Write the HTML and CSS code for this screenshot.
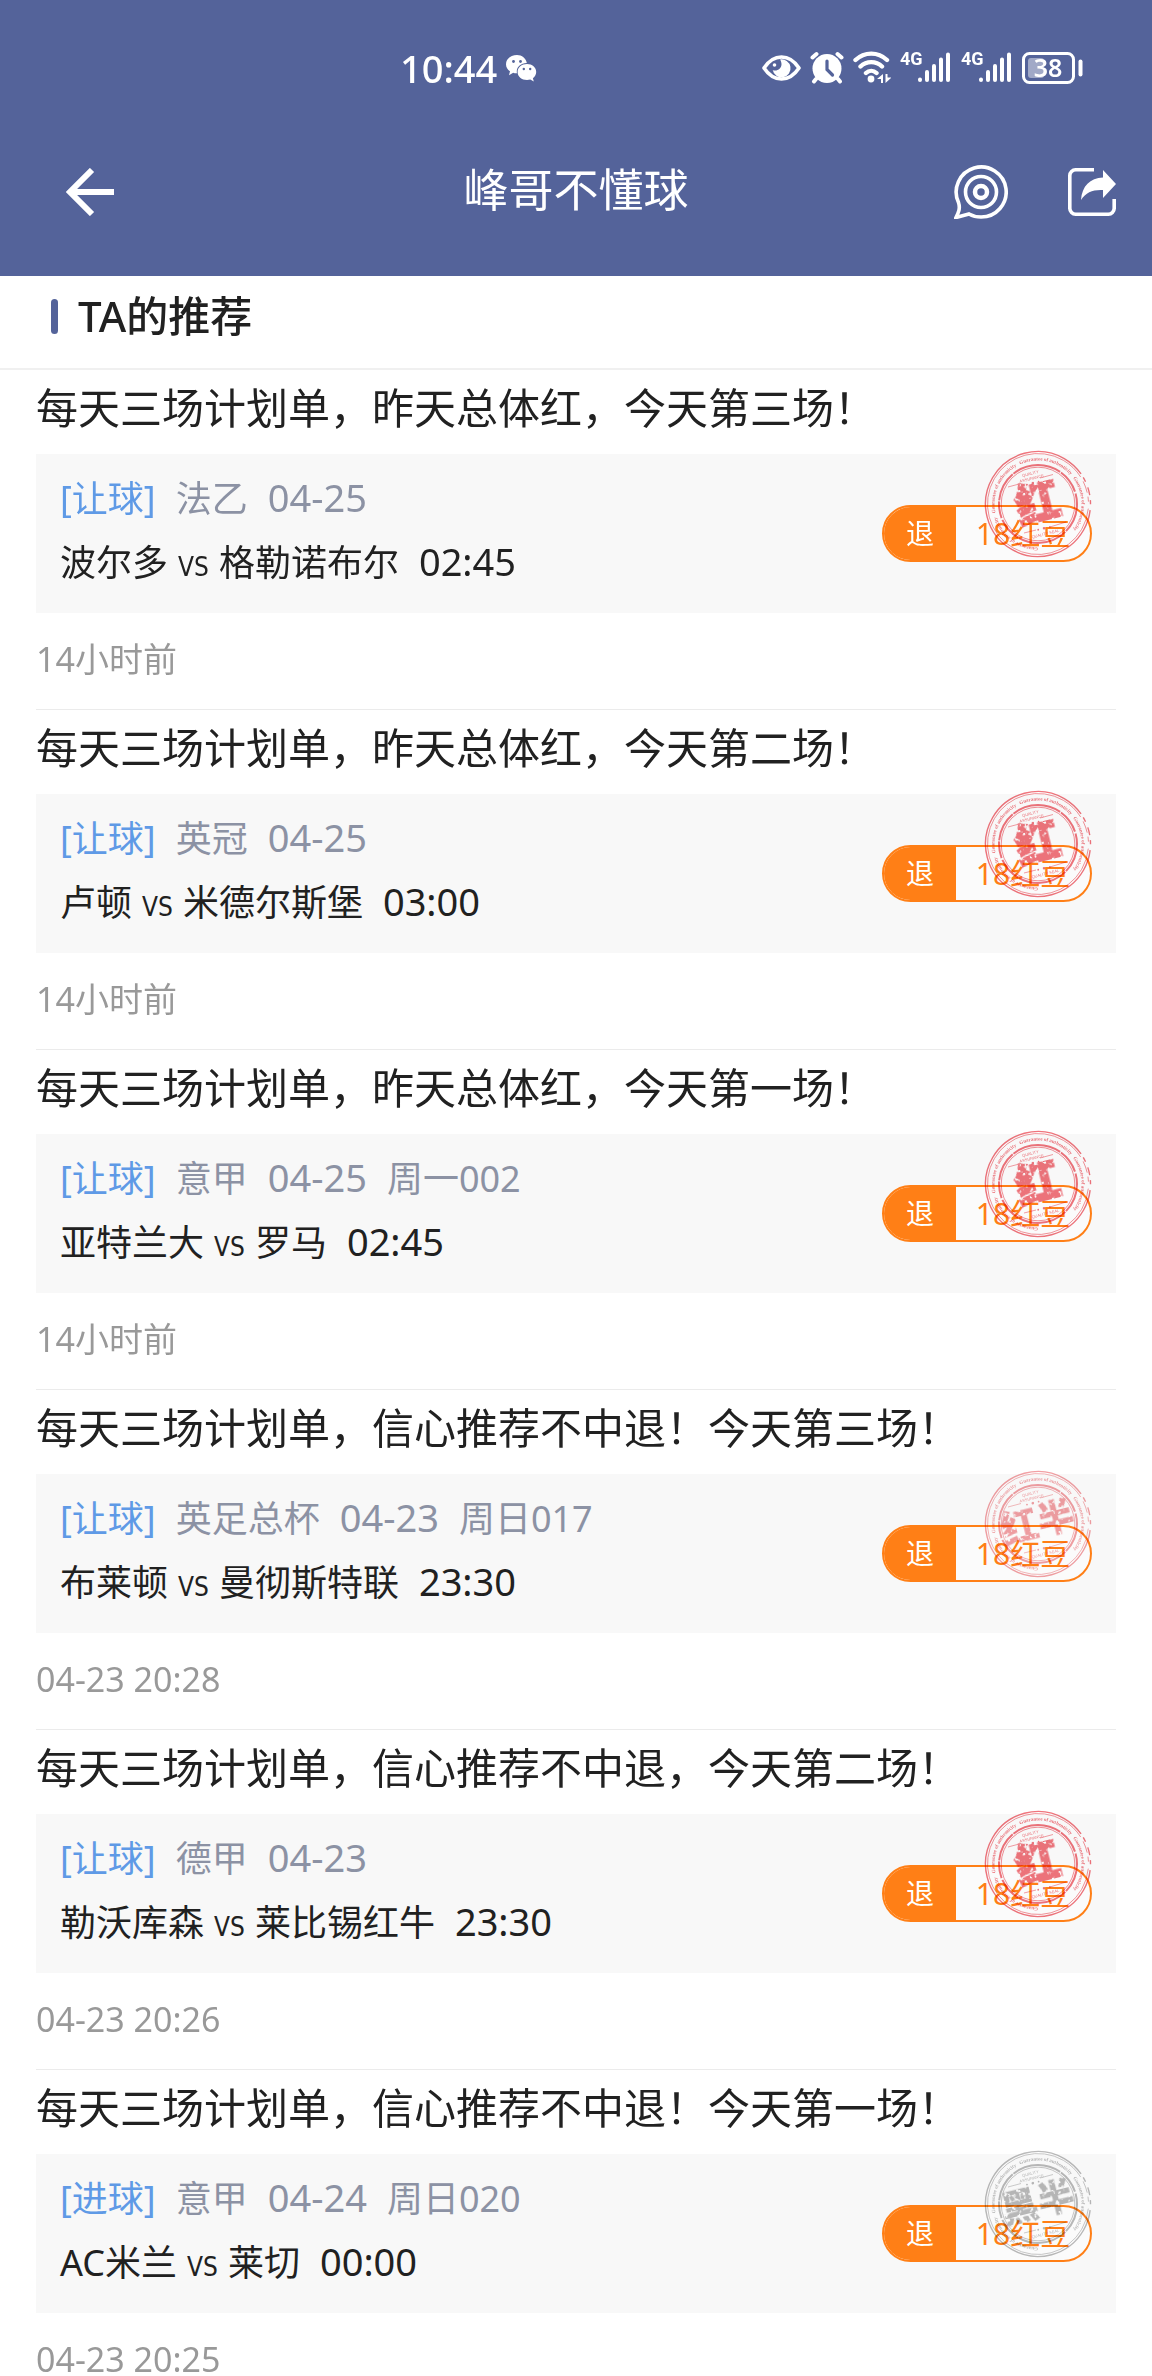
FILE: index.html
```html
<!DOCTYPE html>
<html lang="zh-CN">
<head>
    <meta charset="UTF-8">
    <meta name="viewport" content="width=device-width, initial-scale=1.0">
    <title>峰哥不懂球</title>
    <link rel="stylesheet" href="styles.css">
</head>
<body>

<!-- Shared shapes -->
<svg class="defs" aria-hidden="true">
    <defs>
        <filter id="grunge" x="-10%" y="-10%" width="120%" height="120%">
            <feTurbulence type="fractalNoise" baseFrequency="0.25" numOctaves="2" seed="7" result="noise"/>
            <feColorMatrix in="noise" type="matrix" values="0 0 0 0 0  0 0 0 0 0  0 0 0 0 0  0 0 0 -14 9.6" result="holes"/>
            <feComposite in="SourceGraphic" in2="holes" operator="in"/>
        </filter>
        <path id="ring-path" d="M54 97.5a43.5 43.5 0 1 1 .1 0"/>
    </defs>
    <symbol id="stamp-base" viewBox="0 0 108 108">
        <g fill="none" stroke="currentColor">
            <circle cx="54" cy="54" r="52.5" stroke-width="1.4" stroke-dasharray="270 4 5 6 8 5 4 6 22" transform="rotate(30 54 54)"/>
            <circle cx="54" cy="54" r="50.5" stroke-width=".7" stroke-dasharray="262 5 12 4 5 7 22" transform="rotate(30 54 54)"/>
            <circle cx="54" cy="54" r="39" stroke-width="2" stroke-dasharray="30 1 50 1 24 2 17 1"/>
            <circle cx="54" cy="54" r="36.8" stroke-width=".8"/>
            <path d="M24 37l13-3.500M56 28l13-3.500M40 83l12-3M66 77l16-5" stroke-width=".7"/>
        </g>
        <g fill="currentColor">
            <text class="stamp-ring"><textPath href="#ring-path">Guarantee of authenticity &#160; Guarantee of authenticity &#160; Guarantee of authenticity &#160; Guarantee of authenticity</textPath></text>
            <g transform="rotate(-14 54 54)">
                <text class="stamp-small" x="54" y="24">QUALITY</text>
                <text class="stamp-small" x="54" y="29">ASSURANCE</text>
                <text class="stamp-small" x="54" y="86">QUALITY SEAL</text>
                <circle cx="48" cy="32.500" r=".9"/><circle cx="54" cy="32.500" r="1.300"/><circle cx="60" cy="32.500" r=".9"/>
                <circle cx="48" cy="79" r=".9"/><circle cx="54" cy="79" r="1.300"/><circle cx="60" cy="79" r=".9"/>
            </g>
        </g>
    </symbol>
    <symbol id="signal" viewBox="0 0 52 34">
        <text class="signal-text" x="0" y="14">4G</text>
        <path d="M20 28.500v.5M27 21v8M34 15v14M41 8.500V29M48 3.500V29" stroke="#fff" stroke-width="4" stroke-linecap="round"/>
    </symbol>
</svg>

<div class="screen">
    <header class="header">
        <div class="status-bar">
            <div class="status-left">
                <span>10:44</span>
                <svg width="31" height="27" viewBox="0 0 31 27">
                    <path fill="#fff" d="M11 0C4.900 0 0 4 0 9.200c0 3 1.600 5.500 4 7.100L3 20.200l4.200-2.400c1.200.4 2.500.6 3.800.5-1.300-5.700 3.500-10.400 9.800-10.300C20 3.300 16 0 11 0z"/>
                    <path fill="#fff" d="M21 9c-5.400 0-9.400 3.500-9.400 8s4 8 9.400 8c1.200 0 2.300-.2 3.300-.5l3.500 2-.9-3.200c2-1.500 3.300-3.700 3.300-6.300 0-4.500-4-8-9.200-8z"/>
                    <g fill="#54639a"><circle cx="7.500" cy="6.500" r="1.400"/><circle cx="14.500" cy="6.500" r="1.400"/><circle cx="17.800" cy="14" r="1.200"/><circle cx="24.200" cy="14" r="1.200"/></g>
                </svg>
            </div>
            <div class="status-right">
                <svg width="39" height="34" viewBox="0 0 39 34">
                    <path d="M2 17C7 9.500 13 6 19.500 6S32 9.500 37 17c-5 7.500-11 11-17.500 11S7 24.500 2 17z" fill="none" stroke="#fff" stroke-width="3.600" stroke-linejoin="round"/>
                    <path d="M18 8.500a9 9 0 1 1-7.300 10.500 4 4 0 0 0 2.300.6c3.600 0 6.500-2.800 6.500-6.300 0-2-.6-3.500-1.500-4.800z" fill="#fff"/>
                    <circle cx="12.500" cy="14" r="1.800" fill="#fff"/>
                </svg>
                <svg width="34" height="34" viewBox="0 0 34 34">
                    <circle cx="17" cy="17.500" r="14.500" fill="#fff"/>
                    <path d="M17 10v8.500l5.500 5.500" fill="none" stroke="#54639a" stroke-width="3.200" stroke-linecap="round"/>
                    <path d="M2.500 6.500l4-3.500M31.500 6.500l-4-3.500M6 28l-2 2.500M28 28l2 2.500" stroke="#fff" stroke-width="4" stroke-linecap="round"/>
                </svg>
                <svg width="38" height="34" viewBox="0 0 38 34">
                    <g fill="none" stroke="#fff" stroke-width="4.400" stroke-linecap="round">
                        <path d="M2.500 9c9-8.500 22.500-8.500 31.500 0M7.500 15.500c6-5.800 15.500-5.800 21.500 0M13 22c3-2.800 7.500-2.800 10.500 0"/>
                    </g>
                    <circle cx="18" cy="28" r="3.400" fill="#fff"/>
                    <path d="M30 23v9h-2v-4h-4zM32.500 32V23h2v3.500h4z" fill="#fff"/>
                </svg>
                <svg width="52" height="34"><use href="#signal"/></svg>
                <svg width="52" height="34"><use href="#signal"/></svg>
                <svg width="62" height="34" viewBox="0 0 62 34">
                    <rect x="6" y="7" width="16" height="20" rx="3" fill="#fff" opacity=".45"/>
                    <rect x="1.500" y="2.500" width="50" height="29" rx="6" fill="none" stroke="#fff" stroke-width="3"/>
                    <path d="M58.500 10.500v13" stroke="#fff" stroke-width="4" stroke-linecap="round"/>
                    <text class="battery-text" x="26" y="26">38</text>
                </svg>
            </div>
        </div>
        <nav class="nav-bar">
            <button class="icon-button" aria-label="返回">
                <svg width="48" height="48" viewBox="0 0 48 48"><path d="M26 2L4 24l22 22M4 24h44" fill="none" stroke="#fff" stroke-width="6"/></svg>
            </button>
            <h1>峰哥不懂球</h1>
            <div class="nav-actions">
                <button class="icon-button" aria-label="消息">
                    <svg width="54" height="54" viewBox="0 0 54 54" fill="none" stroke="#fff" stroke-width="3.600">
                        <path d="M4.500 37.500A25 25 0 1 1 27 52c-4.500 0-8.500-1-12-3L2 52.500c2.500-5 4.500-9 2.500-15z"/>
                        <circle cx="27" cy="27" r="15.500"/>
                        <circle cx="27" cy="27" r="6" stroke-width="4.500"/>
                    </svg>
                </button>
                <button class="icon-button" aria-label="分享">
                    <svg width="48" height="48" viewBox="0 0 48 48">
                        <path d="M26 1.800H8A6 6 0 0 0 1.800 8v32A6 6 0 0 0 8 46.200h32a6 6 0 0 0 6.200-6.200V31" fill="none" stroke="#fff" stroke-width="3.600"/>
                        <path d="M13 32C14 18 22 10 35 9.500V2l13 14-13 14v-8c-10-.5-17 2-22 10z" fill="#fff"/>
                    </svg>
                </button>
            </div>
        </nav>
    </header>

    <h2 class="section-title">TA的推荐</h2>

    <main class="list">
        <article class="item">
            <h3>每天三场计划单，昨天总体红，今天第三场！</h3>
            <div class="card">
                <div class="match">
                    <p class="meta"><span class="type">[让球]</span><span>法乙</span><time>04-25</time></p>
                    <p class="teams">波尔多<span class="vs">VS</span>格勒诺布尔<time>02:45</time></p>
                </div>
                <button class="price"><span class="refund">退</span><span class="beans">18红豆</span></button>
                <svg class="stamp red" viewBox="0 0 108 108">
                    <use href="#stamp-base"/>
                    <text class="stamp-word large" x="54" y="69" transform="rotate(-14 54 54)">红</text>
                </svg>
            </div>
            <p class="posted">14小时前</p>
        </article>

        <article class="item">
            <h3>每天三场计划单，昨天总体红，今天第二场！</h3>
            <div class="card">
                <div class="match">
                    <p class="meta"><span class="type">[让球]</span><span>英冠</span><time>04-25</time></p>
                    <p class="teams">卢顿<span class="vs">VS</span>米德尔斯堡<time>03:00</time></p>
                </div>
                <button class="price"><span class="refund">退</span><span class="beans">18红豆</span></button>
                <svg class="stamp red" viewBox="0 0 108 108">
                    <use href="#stamp-base"/>
                    <text class="stamp-word large" x="54" y="69" transform="rotate(-14 54 54)">红</text>
                </svg>
            </div>
            <p class="posted">14小时前</p>
        </article>

        <article class="item">
            <h3>每天三场计划单，昨天总体红，今天第一场！</h3>
            <div class="card">
                <div class="match">
                    <p class="meta"><span class="type">[让球]</span><span>意甲</span><time>04-25</time><span>周一002</span></p>
                    <p class="teams">亚特兰大<span class="vs">VS</span>罗马<time>02:45</time></p>
                </div>
                <button class="price"><span class="refund">退</span><span class="beans">18红豆</span></button>
                <svg class="stamp red" viewBox="0 0 108 108">
                    <use href="#stamp-base"/>
                    <text class="stamp-word large" x="54" y="69" transform="rotate(-14 54 54)">红</text>
                </svg>
            </div>
            <p class="posted">14小时前</p>
        </article>

        <article class="item">
            <h3>每天三场计划单，信心推荐不中退！今天第三场！</h3>
            <div class="card">
                <div class="match">
                    <p class="meta"><span class="type">[让球]</span><span>英足总杯</span><time>04-23</time><span>周日017</span></p>
                    <p class="teams">布莱顿<span class="vs">VS</span>曼彻斯特联<time>23:30</time></p>
                </div>
                <button class="price"><span class="refund">退</span><span class="beans">18红豆</span></button>
                <svg class="stamp half-red" viewBox="0 0 108 108">
                    <use href="#stamp-base"/>
                    <text class="stamp-word" x="54" y="66" transform="rotate(-14 54 54)">红半</text>
                </svg>
            </div>
            <p class="posted">04-23 20:28</p>
        </article>

        <article class="item">
            <h3>每天三场计划单，信心推荐不中退，今天第二场！</h3>
            <div class="card">
                <div class="match">
                    <p class="meta"><span class="type">[让球]</span><span>德甲</span><time>04-23</time></p>
                    <p class="teams">勒沃库森<span class="vs">VS</span>莱比锡红牛<time>23:30</time></p>
                </div>
                <button class="price"><span class="refund">退</span><span class="beans">18红豆</span></button>
                <svg class="stamp red" viewBox="0 0 108 108">
                    <use href="#stamp-base"/>
                    <text class="stamp-word large" x="54" y="69" transform="rotate(-14 54 54)">红</text>
                </svg>
            </div>
            <p class="posted">04-23 20:26</p>
        </article>

        <article class="item">
            <h3>每天三场计划单，信心推荐不中退！今天第一场！</h3>
            <div class="card">
                <div class="match">
                    <p class="meta"><span class="type">[进球]</span><span>意甲</span><time>04-24</time><span>周日020</span></p>
                    <p class="teams">AC米兰<span class="vs">VS</span>莱切<time>00:00</time></p>
                </div>
                <button class="price"><span class="refund">退</span><span class="beans">18红豆</span></button>
                <svg class="stamp black" viewBox="0 0 108 108">
                    <use href="#stamp-base"/>
                    <text class="stamp-word" x="54" y="66" transform="rotate(-14 54 54)">黑半</text>
                </svg>
            </div>
            <p class="posted">04-23 20:25</p>
        </article>
    </main>
</div>

</body>
</html>
```

FILE: styles.css
```css
* {
    box-sizing: border-box;
}
body, h1, h2, h3, p {
    margin: 0;
    padding: 0;
    font-weight: normal;
}
body {
    font-family: "Noto Sans", "Noto Sans CJK SC", sans-serif;
    background-color: #fff;
    color: #212121;
}
button {
    font-family: inherit;
    border: none;
    padding: 0;
    background: none;
    cursor: pointer;
}
svg {
    display: block;
    flex: none;
}
.defs {
    position: absolute;
    width: 0;
    height: 0;
    visibility: hidden;
}
.screen {
    display: flex;
    flex-direction: column;
    height: 100vh;
}

/* Header */
.header {
    background-color: #54639a;
    color: #fff;
}
.status-bar {
    display: flex;
    justify-content: space-between;
    align-items: center;
    height: 108px;
    padding: 28px 68px 0 calc(50% - 176px);
}
.status-left {
    display: flex;
    align-items: center;
    gap: 9px;
    font-size: 38px;
    font-weight: 500;
    line-height: 40px;
}
.status-right {
    display: flex;
    align-items: center;
    gap: 9px;
}
.signal-text {
    font: bold 18px Roboto, sans-serif;
    fill: #fff;
}
.battery-text {
    font: 600 25px "Noto Sans", sans-serif;
    text-anchor: middle;
    fill: #fff;
}
.nav-bar {
    display: grid;
    grid-template-columns: 1fr auto 1fr;
    align-items: center;
    height: 168px;
    padding: 0 36px 0 66px;
}
.nav-bar h1 {
    margin-left: -30px;
    padding-bottom: 4px;
    font-size: 45px;
    line-height: 60px;
}
.icon-button {
    justify-self: start;
}
.nav-actions {
    display: flex;
    justify-content: flex-end;
    align-items: center;
    gap: 60px;
}

/* Section title */
.section-title {
    display: flex;
    align-items: center;
    gap: 20px;
    padding: 12px 51px 24px;
    border-bottom: 2px solid #f0f0f0;
    font-size: 42px;
    font-weight: 500;
    line-height: 56px;
}
.section-title::before {
    content: "";
    width: 7px;
    height: 35px;
    border-radius: 4px;
    background-color: #54639a;
}

/* Recommendations */
.list {
    flex: 1;
    min-height: 0;
    overflow-y: auto;
    scrollbar-width: none;
    padding: 0 36px;
}
.item {
    border-bottom: 1px solid #ebebeb;
}
.item h3 {
    padding: 8px 0 16px;
    font-size: 42px;
    line-height: 60px;
}
.card {
    position: relative;
    display: flex;
    justify-content: space-between;
    align-items: center;
    padding: 0 24px;
    background-color: #f8f8f8;
}
.match {
    padding: 11px 0 20px;
}
.meta, .teams {
    display: flex;
    align-items: baseline;
    height: 64px;
    font-size: 36px;
    line-height: 64px;
}
.meta {
    gap: 20px;
    color: #8c92a4;
}
.type {
    color: #5f9ae6;
}
.match time {
    font-size: 38px;
}
.vs {
    margin: 0 10px;
    font-family: "DejaVu Sans Condensed", "DejaVu Sans", sans-serif;
    font-size: 26px;
}
.teams time {
    margin-left: 20px;
}
.posted {
    padding: 22px 0 26px;
    font-size: 34px;
    line-height: 48px;
    color: #999;
}

/* Price pill */
.price {
    display: flex;
    width: 210px;
    height: 57px;
    border: 2px solid #ff7f16;
    border-radius: 29px;
    overflow: hidden;
    background-color: #fbfbfb;
    line-height: 53px;
}
.refund {
    width: 72px;
    background-color: #ff7f16;
    color: #fff;
    font-size: 28px;
}
.beans {
    flex: 1;
    color: #ff7f16;
    font-size: 30px;
}

/* Result stamp, lies over the pill */
.stamp {
    position: absolute;
    top: -4px;
    right: 24px;
    width: 108px;
    height: 108px;
    pointer-events: none;
    mix-blend-mode: multiply;
}
.stamp.red {
    color: #f0747c;
}
.stamp.half-red {
    color: #f2a0a4;
}
.stamp.black {
    color: #bababa;
}
.stamp-ring {
    font: bold 5px "Liberation Serif", serif;
}
.stamp-small {
    font: 4px "Liberation Sans", sans-serif;
    text-anchor: middle;
}
.stamp-word {
    font-family: "Noto Sans CJK SC", sans-serif;
    font-size: 37px;
    font-weight: 900;
    text-anchor: middle;
    fill: currentColor;
    filter: url(#grunge);
}
.stamp-word.large {
    font-size: 44px;
    stroke: currentColor;
    stroke-width: 2px;
}
```
